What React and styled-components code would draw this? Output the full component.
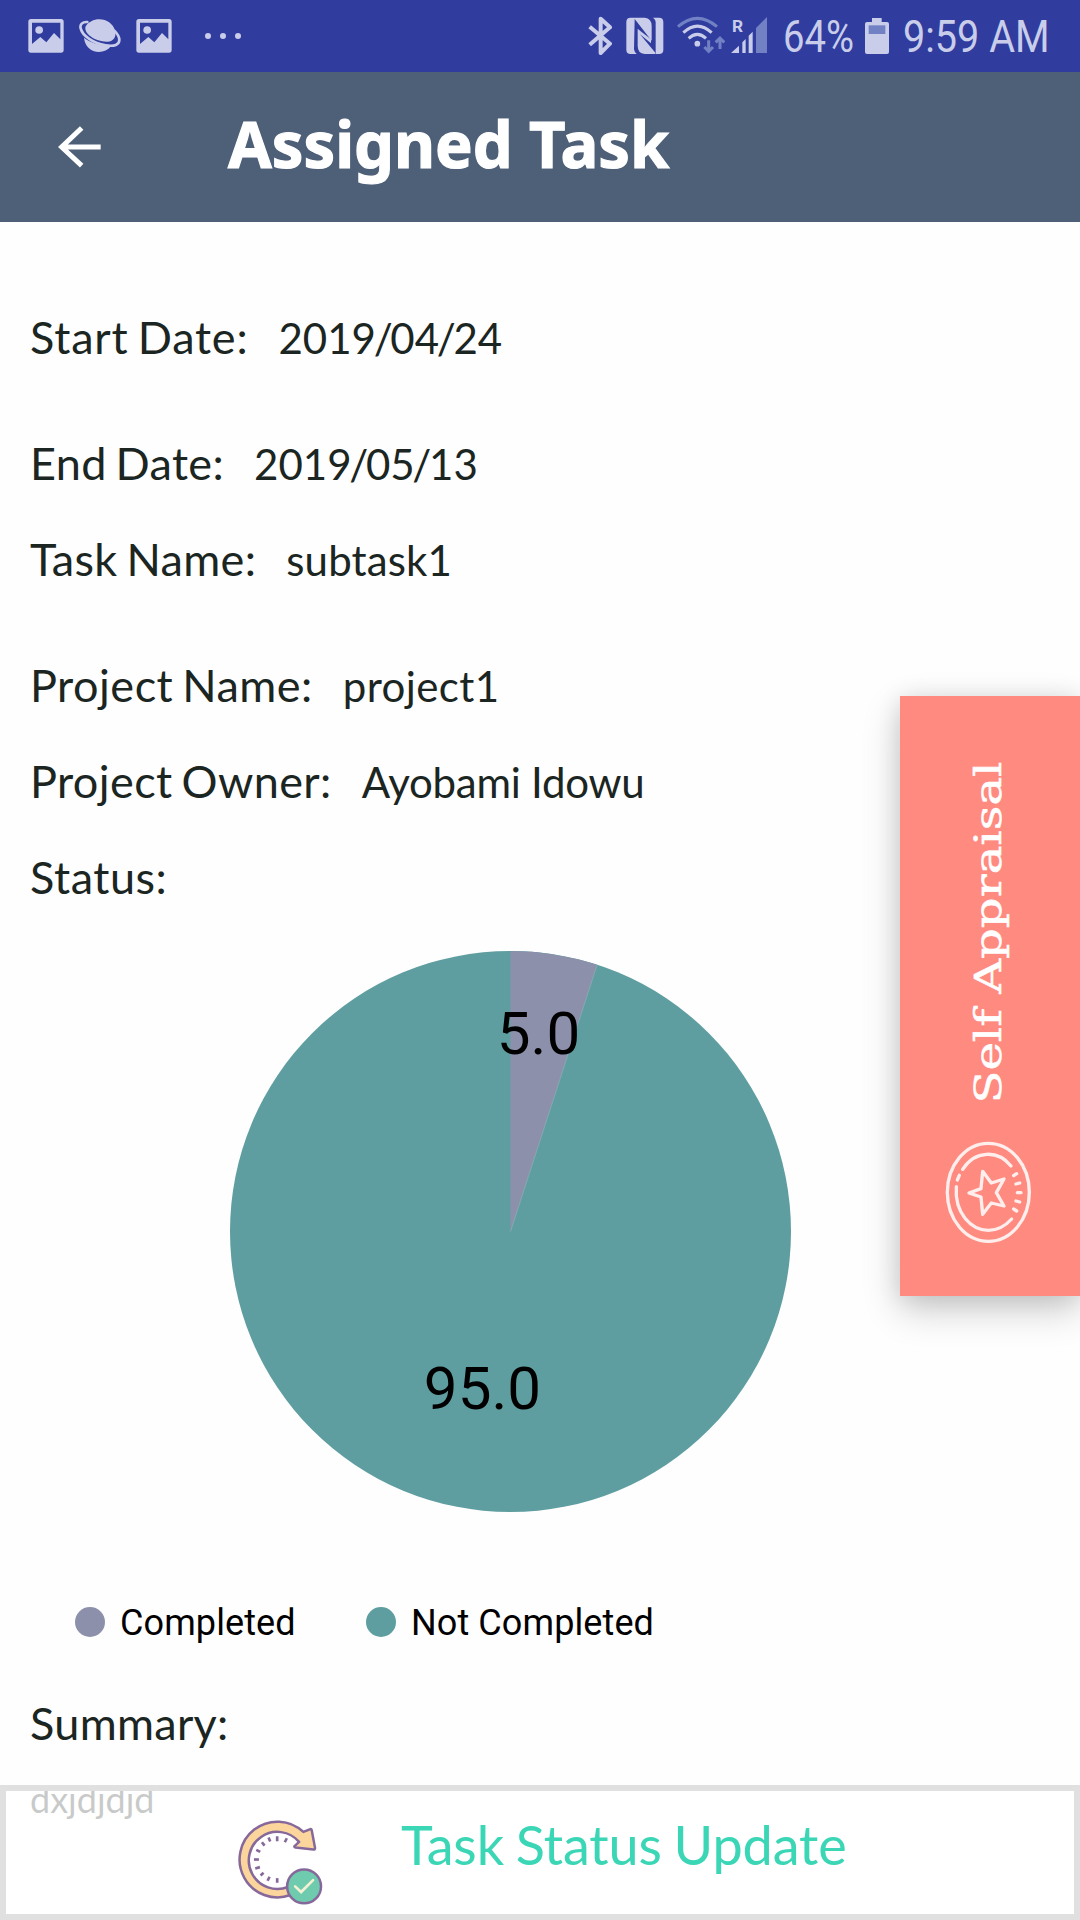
import React from 'react';
import styled, { createGlobalStyle } from 'styled-components';

const ICON = '#c9cdea';
const ICON_DIM = '#7280c4';
const INK = '#1b2522';

const GlobalStyle = createGlobalStyle`
  * { box-sizing: border-box; }
  html, body { margin: 0; padding: 0; background: #fff; }
  body { font-family: Lato, "Noto Sans", sans-serif; color: ${INK}; }
`;

const Screen = styled.div`
  position: relative;
  display: flex;
  flex-direction: column;
  width: 1080px;
  height: 1920px;
  overflow: hidden;
  background: #fefefe;
`;

const StatusBar = styled.header`
  display: flex;
  flex: none;
  justify-content: space-between;
  height: 72px;
  padding: 0 32px 0 28px;
  background: #303d9f;
`;

const IconGroup = styled.div`
  display: flex;
  align-items: center;
`;

const StatusIcon = styled.svg`
  display: block;
  flex: none;
  height: 72px;
  width: ${(p) => p.$w}px;
  margin-right: ${(p) => p.$gap || 0}px;
`;

const StatusText = styled.span`
  flex: none;
  width: ${(p) => p.$w}px;
  margin-right: ${(p) => p.$gap || 0}px;
  padding-top: 2px;
  font: 400 45px/76px Roboto, sans-serif;
  color: ${ICON};
  white-space: nowrap;
  transform: scaleX(${(p) => p.$stretch});
  transform-origin: 0 50%;
`;

const AppBar = styled.div`
  display: flex;
  flex: none;
  align-items: center;
  height: 150px;
  padding-left: 58px;
  background: #4e5f78;
`;

const BackArrow = styled.svg`
  width: 44px;
  height: 42px;
  margin-right: 126px;
`;

const Title = styled.h1`
  margin: 0 0 6px;
  font: 700 64px/90px "Noto Sans", sans-serif;
  color: #fff;
  white-space: nowrap;
  -webkit-text-stroke: 1.2px #fff;
  transform: scaleX(${(p) => p.$stretch});
  transform-origin: 0 50%;
`;

const Content = styled.main`
  display: flex;
  flex-direction: column;
  padding: 88px 30px 0;
`;

const Field = styled.div`
  display: flex;
  align-items: baseline;
  height: 54px;
  margin-bottom: ${(p) => (p.$wide ? 72 : 42)}px;
  white-space: nowrap;
`;

const Label = styled.span`
  margin-right: 30px;
  font-size: 45px;
  line-height: 54px;
  letter-spacing: ${(p) => p.$track || 0}px;
  word-spacing: -3px;
`;

const Value = styled.span`
  font-size: 42px;
  line-height: 50px;
  letter-spacing: ${(p) => p.$track || 0}px;
`;

const Slash = styled.span`
  margin: 0 -2.3px;
`;

const Chart = styled.svg`
  display: block;
  width: 561px;
  height: 561px;
  margin: 5px 0 94px 200px;
`;

const ChartValue = styled.text`
  font: 400 60px Roboto, sans-serif;
  text-anchor: middle;
  fill: #000;
`;

const Legend = styled.div`
  display: flex;
  align-items: center;
  height: 31px;
  margin: 0 0 59px 45px;
`;

const LegendItem = styled.div`
  display: flex;
  align-items: center;
  gap: 15px;
  width: 291px;
  font: 400 36px/42px Roboto, sans-serif;
  color: #000;
  white-space: nowrap;
`;

const LegendText = styled.span`
  padding-top: 2px;
  letter-spacing: 0.1px;
`;

const Dot = styled.i`
  flex: none;
  width: 30px;
  height: 30px;
  border-radius: 50%;
  background: ${(p) => p.$color};
`;

const Summary = styled.p`
  margin: -14px 0 0;
  font-size: 36px;
  line-height: 43px;
`;

const SidePanel = styled.aside`
  position: absolute;
  top: 696px;
  right: 0;
  display: flex;
  flex-direction: column;
  align-items: center;
  justify-content: flex-end;
  width: 180px;
  height: 600px;
  padding-bottom: 51px;
  background: #ff8a80;
  box-shadow: 0 14px 36px rgba(0, 0, 0, 0.2), 0 2px 22px rgba(0, 0, 0, 0.1);
`;

const SideText = styled.span`
  margin: 0 2px 76px 0;
  font: 400 37px/48px "DejaVu Serif", serif;
  color: #fff;
  white-space: nowrap;
  writing-mode: vertical-rl;
  -webkit-text-stroke: 0.5px #fff;
  transform: rotate(180deg) scaleY(${(p) => p.$stretch});
`;

const Badge = styled.svg`
  width: 90px;
  height: 105px;
  margin-right: 4px;
`;

const Footer = styled.footer`
  position: absolute;
  right: 0;
  bottom: 0;
  left: 0;
  display: flex;
  height: 135px;
  padding-left: 230px;
  border: 6px solid #e0e0e0;
  background: rgba(255, 255, 255, 0.76);
  background-clip: padding-box;
`;

const UpdateIcon = styled.svg`
  width: 88px;
  height: 88px;
  margin: 27px 77px 0 0;
`;

const UpdateText = styled.span`
  margin-top: 21px;
  font-size: 54px;
  line-height: 66px;
  letter-spacing: -0.1px;
  word-spacing: -2px;
  color: #3ad6b6;
`;

const Picture = ({ gap }) => (
  <StatusIcon $w={36} $gap={gap} viewBox="84 0 108 216">
    <path
      fill={ICON}
      fillRule="evenodd"
      d="M93 57H183Q191 57 191 65V150Q191 158 183 158H93Q85 158 85 150V65Q85 57 93 57ZM96 68V132L121 111L139 127L162 99L181 118V68Z"
    />
    <circle cx="117.500" cy="90" r="11.500" fill={ICON} />
  </StatusIcon>
);

const Planet = () => (
  <StatusIcon $w={42} $gap={15} viewBox="237 0 126 216">
    <path fill={ICON} d="M257 79C265 66 281 58 298 58C320 58 339 71 345 92C350 108 342 124 322 125C287 126 249 101 257 79Z" />
    <path fill={ICON} d="M252 113C270 127 296 137 333 139C324 150 311 156 297 156C273 156 254 138 252 113Z" />
    <path fill="none" stroke={ICON} strokeWidth="8" strokeLinecap="round" d="M262 66C247 65 239 74 242 85C247 107 280 130 317 136C344 140 358 134 358 120C358 109 352 101 343 92" />
  </StatusIcon>
);

const More = () => (
  <StatusIcon $w={36} viewBox="615 0 108 216">
    {[624, 669, 714].map((x) => (
      <circle key={x} cx={x} cy="108" r="9" fill={ICON} />
    ))}
  </StatusIcon>
);

const Bluetooth = () => (
  <StatusIcon $w={24} $gap={14} viewBox="86 0 72 216">
    <path d="M91 80L152 131L124 159V56L152 82L91 134" fill="none" stroke={ICON} strokeWidth="12" strokeLinejoin="round" />
  </StatusIcon>
);

const Nfc = () => (
  <StatusIcon $w={38} $gap={13} viewBox="200 0 114 216">
    <path fill={ICON} d="M214 53H256Q277 55 277 78V122L226 57L224 148Q225 156 232 162H214Q201 162 201 149V66Q201 53 214 53Z" />
    <path fill={ICON} d="M281 53H299Q312 53 312 66V149Q312 162 299 162H289V66Q289 58 281 53Z" />
    <path fill={ICON} d="M235 86L244 94L275 118V130L242 103L288 158V162H256Q235 160 235 138Z" />
  </StatusIcon>
);

const Wifi = () => (
  <StatusIcon $w={48} $gap={6} viewBox="354 0 144 216">
    <g fill="none" strokeWidth="9">
      <path stroke={ICON_DIM} d="M357 80Q415 30 474 80" />
      <path stroke={ICON} d="M373 98Q415 59 458 98" />
      <path stroke={ICON} d="M389 115Q415 91 441 115" />
      <path stroke={ICON_DIM} d="M449 121V153M436 141L449 154L462 141M483 147V115M470 127L483 114L496 127" />
    </g>
    <circle cx="415" cy="131" r="8.500" fill={ICON} />
  </StatusIcon>
);

const SignalLetter = styled.text`
  font: 700 52px Roboto, sans-serif;
  fill: ${ICON};
`;

const Signal = () => (
  <StatusIcon $w={36} $gap={16} viewBox="516 0 108 216">
    <SignalLetter x="519" y="97">R</SignalLetter>
    <path fill={ICON} d="M516 159L540 137V159ZM550 127L560 117V159H550ZM569 107L581 95V159H569Z" />
    <path fill={ICON_DIM} d="M591 84L624 51V159H591Z" />
  </StatusIcon>
);

const Battery = () => (
  <StatusIcon $w={24} $gap={14} viewBox="918 0 72 216">
    <path fill={ICON} d="M939 54H968V66H984Q990 66 990 72V156Q990 162 984 162H924Q918 162 918 156V72Q918 66 924 66H939Z" />
    <path fill={ICON_DIM} d="M929 76H979V102H929Z" />
  </StatusIcon>
);

const fields = [
  { label: 'Start Date:', value: '2019/04/24', wide: true, track: 0.8 },
  { label: 'End Date:', value: '2019/05/13', track: 0.35 },
  { label: 'Task Name:', value: 'subtask1', wide: true, track: 0.35, valueTrack: 0.15 },
  { label: 'Project Name:', value: 'project1', track: 0.5, valueTrack: 0.38 },
  { label: 'Project Owner:', value: 'Ayobami Idowu', track: 0.4, valueTrack: -0.25 },
  { label: 'Status:', track: 0.55 },
];

const withSlashes = (value) =>
  value.split('/').map((part, i) => (
    <React.Fragment key={i}>
      {i > 0 && <Slash>/</Slash>}
      {part}
    </React.Fragment>
  ));

const ticks = [
  [174, 170, 174, 185],
  [203, 176, 197, 188],
  [148, 174, 153, 186],
  [128, 188, 136, 198],
  [111, 211, 123, 217],
  [104, 240, 119, 240],
  [108, 267, 122, 263],
  [124, 288, 133, 280],
  [145, 304, 151, 292],
  [174, 310, 174, 296],
];

export default function App() {
  return (
    <Screen>
      <GlobalStyle />
      <StatusBar>
        <IconGroup>
          <Picture gap={15} />
          <Planet />
          <Picture gap={33} />
          <More />
        </IconGroup>
        <IconGroup>
          <Bluetooth />
          <Nfc />
          <Wifi />
          <Signal />
          <StatusText $w={69} $gap={13} $stretch={0.85}>64%</StatusText>
          <Battery />
          <StatusText $w={145} $stretch={0.88}>9:59 AM</StatusText>
        </IconGroup>
      </StatusBar>

      <AppBar>
        <BackArrow viewBox="174 378 132 126">
          <path d="M245 384L185 441L245 497M185 441H302" fill="none" stroke="#fff" strokeWidth="15" />
        </BackArrow>
        <Title $stretch={0.987}>Assigned Task</Title>
      </AppBar>

      <Content>
        {fields.map((f) => (
          <Field key={f.label} $wide={f.wide}>
            <Label $track={f.track}>{f.label}</Label>
            {f.value && <Value $track={f.valueTrack}>{withSlashes(f.value)}</Value>}
          </Field>
        ))}
        <Chart viewBox="0 0 560 560">
          <circle cx="280" cy="280" r="280" fill="#5f9ea0" />
          <path d="M280 280V0A280 280 0 0 1 366.500 13.700Z" fill="#8c90ab" />
          <path d="M280 280L366.500 13.700" stroke="#8fb4b8" strokeWidth="0.6" />
          <ChartValue x="308" y="103">5.0</ChartValue>
          <ChartValue x="252" y="457.500">95.0</ChartValue>
        </Chart>
        <Legend>
          <LegendItem>
            <Dot $color="#8c90ab" />
            <LegendText>Completed</LegendText>
          </LegendItem>
          <LegendItem>
            <Dot $color="#5f9ea0" />
            <LegendText>Not Completed</LegendText>
          </LegendItem>
        </Legend>
        <Field>
          <Label $track={0.3}>Summary:</Label>
        </Field>
        <Summary>dxjdjdjd</Summary>
      </Content>

      <SidePanel>
        <SideText $stretch={1.3}>Self Appraisal</SideText>
        <Badge viewBox="190 420 270 315">
          <g fill="none" stroke="#fff" strokeOpacity="0.85" strokeWidth="10" strokeLinejoin="round" strokeLinecap="round">
            <ellipse cx="326" cy="577" rx="123" ry="147" />
            <path d="M249 508C286 450 355 449 394 498M230 560C224 640 275 691 326 691C352 691 377 678 396 657M233 540L239 526" />
            <path d="M402 527L411 521M409 552L420 549M413 578H424M409 603L420 606M402 627L411 633" />
            <path d="M268 579L304 566L309 514L335 549L373 537L350 578L373 618L335 609L309 643L304 591Z" />
          </g>
        </Badge>
      </SidePanel>

      <Footer>
        <UpdateIcon viewBox="50 115 265 265">
          <path
            d="M214 347A114 114 0 1 1 253 157L272 149Q277 146 278 152L288 205Q288 210 283 210L229 204Q223 202 228 198L240 187A86 86 0 1 0 208 322Z"
            fill="#fbd59b"
            stroke="#86689a"
            strokeWidth="7.500"
            strokeLinejoin="round"
          />
          <g stroke="#86689a" strokeWidth="8">
            {ticks.map(([x1, y1, x2, y2]) => (
              <line key={`${x1}-${y1}`} x1={x1} y1={y1} x2={x2} y2={y2} />
            ))}
          </g>
          <circle cx="255" cy="321" r="51" fill="#6fcbae" stroke="#86689a" strokeWidth="7.500" />
          <path d="M228 321L246 338L282 302" fill="none" stroke="#f3f0d3" strokeWidth="8" strokeLinecap="round" />
        </UpdateIcon>
        <UpdateText>Task Status Update</UpdateText>
      </Footer>
    </Screen>
  );
}
